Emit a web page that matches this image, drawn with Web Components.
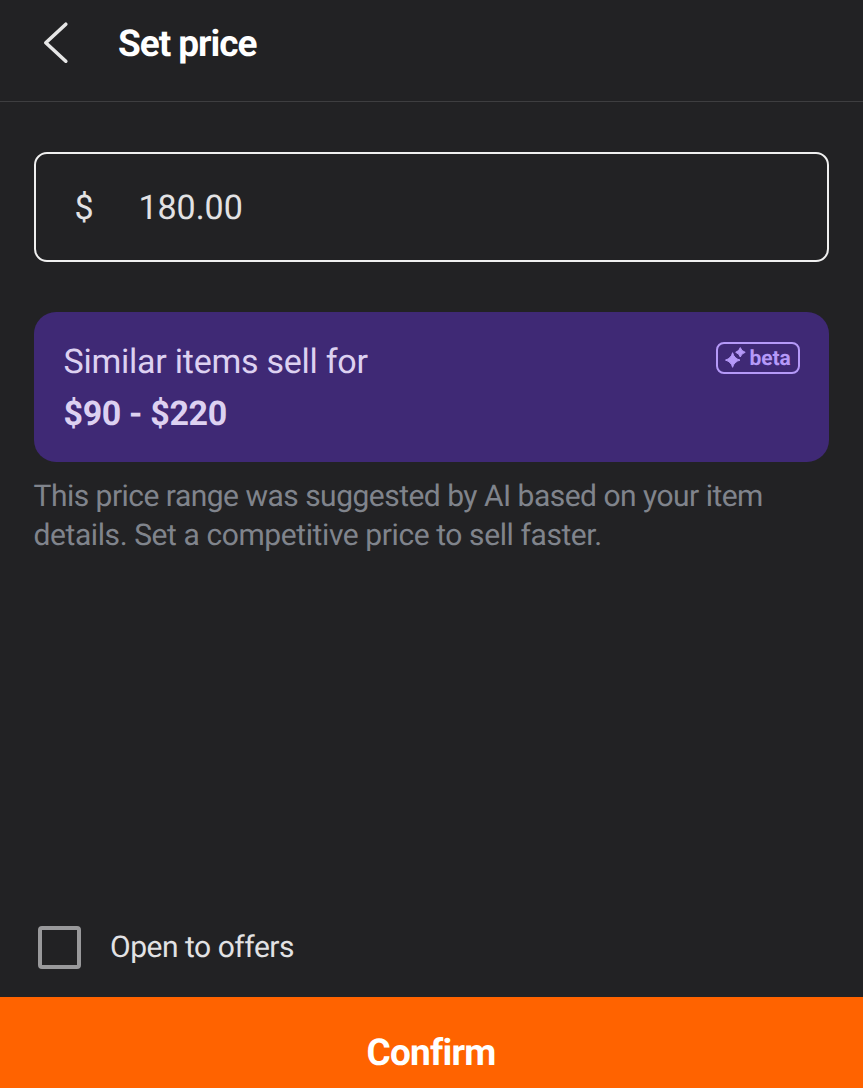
<!DOCTYPE html>
<html lang="en">
<head>
<meta charset="utf-8">
<title>Set price</title>
<style>
html,body{margin:0;height:100%;background:#222224;overflow:hidden}
body{font-family:Roboto,"Liberation Sans",sans-serif;color:#e2e2e4;text-rendering:geometricPrecision}
</style>
</head>
<body>
<price-screen></price-screen>
<script>
const define = (name, html) => {
  const tpl = document.createElement('template');
  tpl.innerHTML = html;
  customElements.define(name, class extends HTMLElement {
    constructor() {
      super();
      this.attachShadow({ mode: 'open' }).append(tpl.content.cloneNode(true));
    }
  });
};

define('app-header', `
<style>
:host{display:flex;box-sizing:border-box;height:102px;padding:0 42px 14px;align-items:center;border-bottom:1px solid #3e3e40;flex:none}
svg{display:block;width:28px;height:44px;margin:0 48px 1px 0}
h1{margin:2px 0 0;font-size:37px;line-height:44px;font-weight:700;letter-spacing:-1.05px;color:#fff}
</style>
<svg viewBox="0 0 28 44" fill="none" stroke="#e6e6e6" stroke-width="3.6" stroke-linecap="round" stroke-linejoin="round"><path d="M23.8 3.2 3.8 21.8 23.8 40.2"/></svg>
<h1><slot></slot></h1>`);

define('price-field', `
<style>
:host{display:flex;box-sizing:border-box;height:110px;border:2px solid #f0f0f0;border-radius:13px;padding:2px 0 0 39px;align-items:center;font-size:34px;line-height:40px}
.sign{width:64px}
.value{letter-spacing:-.05px}
</style>
<span class="sign"><slot name="currency"></slot></span><span class="value"><slot></slot></span>`);

define('beta-badge', `
<style>
:host{display:flex;box-sizing:border-box;height:32px;width:84px;border:2px solid #b599f8;border-radius:8px;padding-left:7px;align-items:center;color:#b599f8;font-size:21px;line-height:26px;font-weight:700;letter-spacing:-.1px}
svg{display:block;width:21px;height:21px;margin:0 3.5px 1px 0}
span{padding-top:2px}
</style>
<svg viewBox="0 0 21 21" fill="currentColor" stroke="currentColor" stroke-width="1" stroke-linejoin="round"><path d="M7.6 5.7Q9 11.4 15 13.1 9 14.8 7.6 20.3 6.2 14.8 .5 13.1 6.2 11.4 7.6 5.7ZM15.3.6Q16.2 4 20.2 5.3 16.2 6.6 15.3 10 14.3 6.6 10.7 5.3 14.3 4 15.3.6Z"/></svg>
<span><slot></slot></span>`);

define('price-hint', `
<style>
:host{display:flex;box-sizing:border-box;height:150px;padding:24px 29px 0 30px;border-radius:22px;background:#3f2975;color:#ddd1f1;justify-content:space-between;align-items:flex-start;font-size:34px;line-height:52px}
.range{font-weight:700;letter-spacing:-.35px}
.label{letter-spacing:-.25px}
.badge{margin-top:6px}
</style>
<div><div class="label"><slot></slot></div><div class="range"><slot name="range"></slot></div></div>
<div class="badge"><slot name="badge"></slot></div>`);

define('helper-text', `
<style>
:host{display:block;padding-top:16px;font-size:30px;line-height:38.6px;letter-spacing:-.41px;color:#80848c}
:host::first-line{letter-spacing:-.515px}
</style>
<slot></slot>`);

define('check-option', `
<style>
:host{display:flex;align-items:center;gap:29px;padding-left:38px;font-size:30px;line-height:40px;letter-spacing:-.47px;flex:none}
i{box-sizing:border-box;width:43px;height:43px;border:4px solid #99999b;border-radius:4px}
span{padding-top:2px}
</style>
<i></i><span><slot></slot></span>`);

define('confirm-button', `
<style>
:host{display:flex;box-sizing:border-box;height:91px;padding:35px 1px 0 0;justify-content:center;background:#ff6300;color:#fff;font-size:37px;line-height:44px;font-weight:700;letter-spacing:-.8px;flex:none}
</style>
<slot></slot>`);

define('price-screen', `
<style>
:host{display:flex;flex-direction:column;height:100vh}
main{flex:1;padding:50px 34px 0 33.5px}
price-hint{margin-top:50px}
check-option{margin-bottom:28.5px}
</style>
<app-header>Set price</app-header>
<main>
<price-field><span slot="currency">$</span>180.00</price-field>
<price-hint>Similar items sell for<span slot="range">$90 - $220</span><beta-badge slot="badge">beta</beta-badge></price-hint>
<helper-text>This price range was suggested by AI based on your item<br>details. Set a competitive price to sell faster.</helper-text>
</main>
<check-option>Open to offers</check-option>
<confirm-button>Confirm</confirm-button>`);
</script>
</body>
</html>
